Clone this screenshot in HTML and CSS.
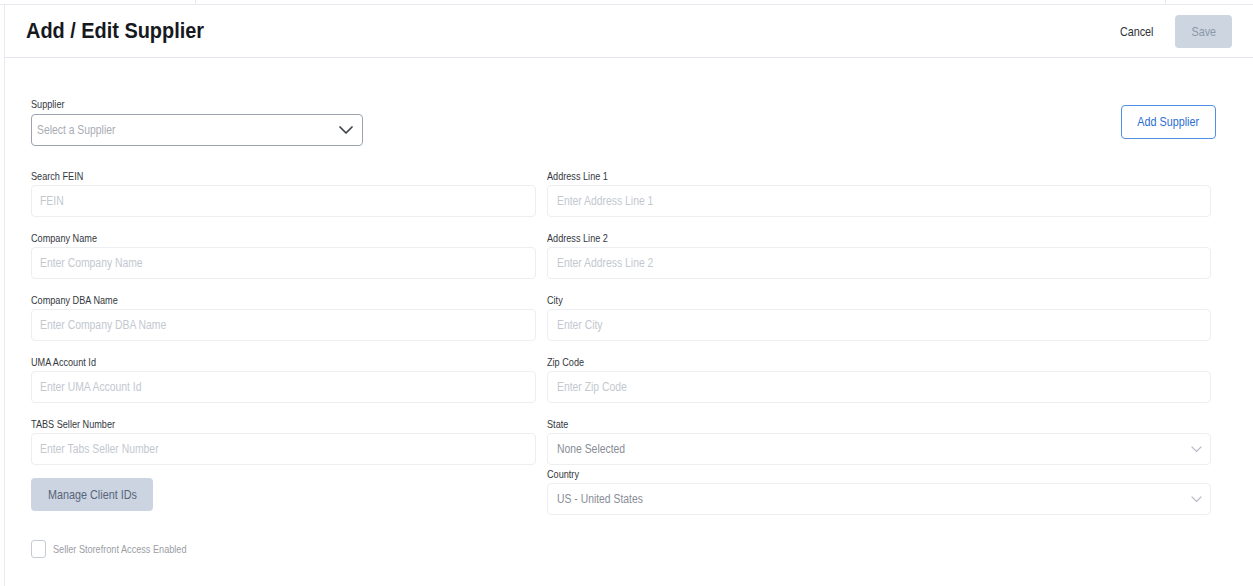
FILE: index.html
```html
<!DOCTYPE html>
<html lang="en">
<head>
<meta charset="utf-8">
<title>Add / Edit Supplier</title>
<link rel="stylesheet" href="styles.css">
</head>
<body>
<div class="topstrip">
  <div class="ts-cell ts-a"></div>
  <div class="ts-cell ts-b"></div>
  <div class="ts-cell ts-c"></div>
</div>
<div class="panel">
  <header class="head">
    <h1 class="title"><span class="title-t">Add / Edit Supplier</span></h1>
    <div class="actions">
      <button class="btn-cancel" type="button"><span class="t t-right">Cancel</span></button>
      <button class="btn-save" type="button"><span class="t t-mid">Save</span></button>
    </div>
  </header>
  <main class="body">
    <div class="supplier-row">
      <div class="supplier-field">
        <div class="label"><span class="t">Supplier</span></div>
        <div class="select select-dark">
          <span class="t ph-dark">Select a Supplier</span>
          <svg class="chev-dark" width="14" height="8" viewBox="0 0 14 8"><path d="M1 1 L7 7 L13 1" fill="none" stroke="#3d4148" stroke-width="1.7" stroke-linecap="round" stroke-linejoin="round"/></svg>
        </div>
      </div>
      <button class="btn-add" type="button"><span class="t t-mid">Add Supplier</span></button>
    </div>

    <div class="grid">
      <div class="col">
        <div class="field"><div class="label"><span class="t">Search FEIN</span></div><div class="input"><span class="t ph">FEIN</span></div></div>
        <div class="field"><div class="label"><span class="t">Company Name</span></div><div class="input"><span class="t ph">Enter Company Name</span></div></div>
        <div class="field"><div class="label"><span class="t">Company DBA Name</span></div><div class="input"><span class="t ph">Enter Company DBA Name</span></div></div>
        <div class="field"><div class="label"><span class="t">UMA Account Id</span></div><div class="input"><span class="t ph">Enter UMA Account Id</span></div></div>
        <div class="field field-last"><div class="label"><span class="t">TABS Seller Number</span></div><div class="input"><span class="t ph">Enter Tabs Seller Number</span></div></div>
        <button class="btn-manage" type="button"><span class="t t-mid">Manage Client IDs</span></button>
      </div>
      <div class="col col-right">
        <div class="field"><div class="label"><span class="t">Address Line 1</span></div><div class="input"><span class="t ph">Enter Address Line 1</span></div></div>
        <div class="field"><div class="label"><span class="t">Address Line 2</span></div><div class="input"><span class="t ph">Enter Address Line 2</span></div></div>
        <div class="field"><div class="label"><span class="t">City</span></div><div class="input"><span class="t ph">Enter City</span></div></div>
        <div class="field"><div class="label"><span class="t">Zip Code</span></div><div class="input"><span class="t ph">Enter Zip Code</span></div></div>
        <div class="field field-tight"><div class="label"><span class="t">State</span></div>
          <div class="input select-light"><span class="t val">None Selected</span>
            <svg class="chev-light" width="11" height="7" viewBox="0 0 11 7"><path d="M1 1 L5.5 5.5 L10 1" fill="none" stroke="#b9bdc4" stroke-width="1.2" stroke-linecap="round"/></svg>
          </div>
        </div>
        <div class="field field-last"><div class="label"><span class="t">Country</span></div>
          <div class="input select-light"><span class="t val">US - United States</span>
            <svg class="chev-light" width="11" height="7" viewBox="0 0 11 7"><path d="M1 1 L5.5 5.5 L10 1" fill="none" stroke="#b9bdc4" stroke-width="1.2" stroke-linecap="round"/></svg>
          </div>
        </div>
      </div>
    </div>

    <label class="check">
      <span class="box"></span>
      <span class="t check-text">Seller Storefront Access Enabled</span>
    </label>
  </main>
</div>
</body>
</html>
```

FILE: styles.css
```css
* { box-sizing: border-box; }
html, body { margin: 0; padding: 0; background: #ffffff; }
body {
  font-family: "Liberation Sans", Arial, sans-serif;
  color: #2b2f36;
  width: 1253px;
  height: 586px;
  overflow: hidden;
}

/* condensed text rendering */
.t {
  display: inline-block;
  white-space: nowrap;
  transform: scaleX(0.83);
  transform-origin: left center;
}
.t-mid { transform-origin: center center; }
.t-right { transform-origin: right center; }

.topstrip {
  height: 5px;
  display: flex;
  border-bottom: 1px solid #e7ebf0;
}
.ts-cell { height: 4px; }
.ts-a { width: 196px; border-right: 1px solid #e7ebf0; }
.ts-b { width: 970px; border-right: 1px solid #e7ebf0; }
.ts-c { flex: 1; }

.panel {
  margin-left: 4px;
  border-left: 1px solid #e7ebf0;
  height: 581px;
}

.head {
  height: 53px;
  border-bottom: 1px solid #e4e8ee;
  display: flex;
  align-items: center;
  justify-content: space-between;
  padding: 0 21px 0 21px;
}
.title {
  margin: 0;
  font-size: 22px;
  line-height: 26px;
  font-weight: bold;
  color: #16191e;
}
.title-t {
  display: inline-block;
  white-space: nowrap;
  transform: scaleX(0.905);
  transform-origin: left center;
}
.actions { display: flex; align-items: center; gap: 22px; }
.btn-cancel {
  border: 0;
  background: none;
  font-family: inherit;
  font-size: 13px;
  color: #2e3238;
  padding: 0;
}
.btn-save {
  width: 57px;
  height: 33px;
  border: 0;
  border-radius: 4px;
  background: #cdd5e0;
  color: #8b97aa;
  font-family: inherit;
  font-size: 13px;
  padding: 0;
}

.body { padding: 39px 37px 0 26px; }

.supplier-row {
  display: flex;
  align-items: center;
  justify-content: space-between;
}
.supplier-field { width: 332px; }

.label {
  font-size: 11px;
  line-height: 14px;
  color: #34383e;
  margin-bottom: 2px;
}
.supplier-field .label { margin-bottom: 3px; }

.select, .input {
  height: 32px;
  border-radius: 4px;
  display: flex;
  align-items: center;
  justify-content: space-between;
  background: #fff;
}
.select-dark {
  border: 1px solid #9ba3af;
  padding: 0 9px 0 5px;
}
.ph-dark { font-size: 12.5px; color: #a7acb4; }
.chev-dark { display: block; }

.btn-add {
  width: 95px;
  height: 34px;
  border: 1px solid #4f8fe6;
  border-radius: 4px;
  background: #fff;
  color: #2c6dd2;
  font-family: inherit;
  font-size: 13px;
  padding: 0;
}

.grid {
  margin-top: 23px;
  display: grid;
  grid-template-columns: 505px 664px;
  column-gap: 11px;
  align-items: start;
}
.col { display: flex; flex-direction: column; }

.field { margin-bottom: 14px; }
.field-tight { margin-bottom: 2px; }
.field-last { margin-bottom: 0; }

.input {
  border: 1px solid #eceef2;
  padding: 0 8px;
}
.col-right .input { padding: 0 8px 0 9px; }
.ph { font-size: 12.5px; color: #c3c8cf; }
.val { font-size: 12.5px; color: #888d96; }
.chev-light { display: block; }

.btn-manage {
  margin-top: 13px;
  width: 122px;
  height: 33px;
  border: 0;
  border-radius: 4px;
  background: #cbd4e0;
  color: #58657a;
  font-family: inherit;
  font-size: 13px;
  padding: 0;
}

.check {
  margin-top: 25px;
  display: flex;
  align-items: center;
  gap: 7px;
}
.box {
  width: 15px;
  height: 18px;
  border: 1px solid #c6cbd3;
  border-radius: 3px;
  background: #fff;
}
.check-text { font-size: 11px; color: #9a9ea5; }
```
